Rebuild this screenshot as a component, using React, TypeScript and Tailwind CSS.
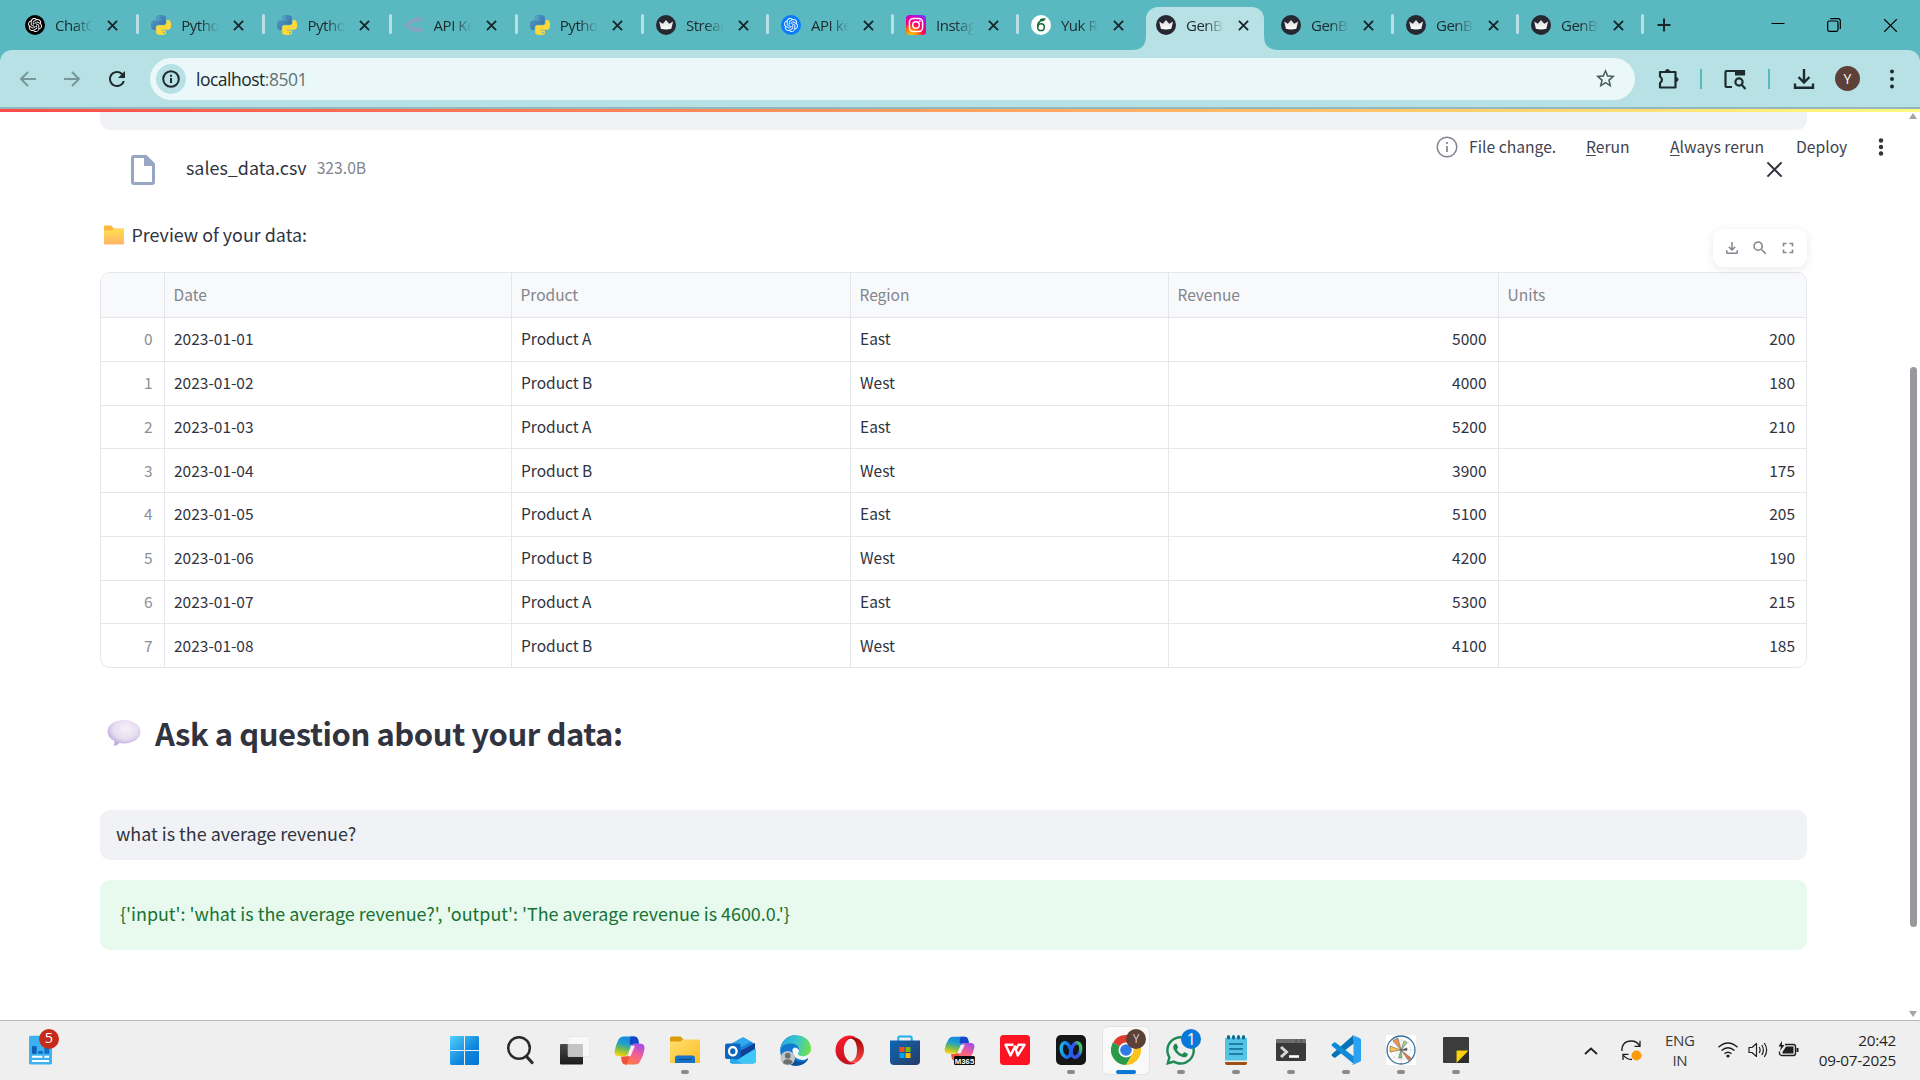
import React from "react";
import { SiOpenai } from "react-icons/si";
import { FaWhatsapp } from "react-icons/fa";
import { MdOutlineFileDownload, MdSearch, MdFullscreen, MdStarBorder, MdRefresh } from "react-icons/md";

/* ---------- favicons ---------- */

function PythonIcon() {
  return (
    <svg viewBox="0 0 24 24" className="size-5">
      <defs>
        <linearGradient id="pyb" x1="0" y1="0" x2="1" y2="1">
          <stop offset="0" stopColor="#5a9fd4" />
          <stop offset="1" stopColor="#306998" />
        </linearGradient>
      </defs>
      <path
        fill="url(#pyb)"
        d="M14.25.18l.9.2.73.26.59.3.45.32.34.34.25.34.16.33.1.3.04.26.02.2-.01.13V8.5l-.05.63-.13.55-.21.46-.26.38-.3.31-.33.25-.35.19-.35.14-.33.1-.3.07-.26.04-.21.02H8.77l-.69.05-.59.14-.5.22-.41.27-.33.32-.27.35-.2.36-.15.37-.1.35-.07.32-.04.27-.02.21v3.06H3.17l-.21-.03-.28-.07-.32-.12-.35-.18-.36-.26-.36-.36-.35-.46-.32-.59-.28-.73-.21-.88-.14-1.05-.05-1.23.06-1.22.16-1.04.24-.87.32-.71.36-.57.4-.44.42-.33.42-.24.4-.16.36-.1.32-.05.24-.01h.16l.06.01h8.16v-.83H6.18l-.01-2.75-.02-.37.05-.34.11-.31.17-.28.25-.26.31-.23.38-.2.44-.18.51-.15.58-.12.64-.1.71-.06.77-.04.84-.02 1.27.05zm-6.3 1.98l-.23.33-.08.41.08.41.23.34.33.22.41.09.41-.09.33-.22.23-.34.08-.41-.08-.41-.23-.33-.33-.22-.41-.09-.41.09z"
      />
      <path
        fill="#ffd83a"
        d="M21.1 6.11l.28.06.32.12.35.18.36.27.36.35.35.47.32.59.28.73.21.88.14 1.04.05 1.23-.06 1.23-.16 1.04-.24.86-.32.71-.36.57-.4.45-.42.33-.42.24-.4.16-.36.09-.32.05-.24.02-.16-.01h-8.22v.82h5.84l.01 2.76.02.36-.05.34-.11.31-.17.29-.25.25-.31.24-.38.2-.44.17-.51.15-.58.13-.64.09-.71.07-.77.04-.84.01-1.27-.04-1.07-.14-.9-.2-.73-.25-.59-.3-.45-.33-.34-.34-.25-.34-.16-.33-.1-.3-.04-.25-.02-.2.01-.13v-5.34l.05-.64.13-.54.21-.46.26-.38.3-.32.33-.24.35-.2.35-.14.33-.1.3-.06.26-.04.21-.02.13-.01h5.84l.69-.05.59-.14.5-.21.41-.28.33-.32.27-.35.2-.36.15-.36.1-.35.07-.32.04-.28.02-.21V6.07h2.09l.14.01zm-6.47 14.25l-.23.33-.08.41.08.41.23.33.33.23.41.08.41-.08.33-.23.23-.33.08-.41-.08-.41-.23-.33-.33-.23-.41-.08-.41.08z"
      />
    </svg>
  );
}

function CrownIcon() {
  return (
    <svg viewBox="0 0 20 20" className="size-5">
      <defs>
        <linearGradient id="crown" x1="0" y1="0" x2="0" y2="1">
          <stop offset="0" stopColor="#d8d8da" />
          <stop offset="1" stopColor="#ffffff" />
        </linearGradient>
      </defs>
      <circle cx="10" cy="10" r="10" fill="#262730" />
      <path d="M3.2 6.4l3.6 2.3L10 5l3.2 3.7 3.9-2.3-1.8 7.4Q10 15.2 4.9 13.8z" fill="url(#crown)" />
    </svg>
  );
}

function OpenAiIcon({ blue }: { blue?: boolean }) {
  return (
    <span className={`flex size-5 items-center justify-center rounded-full ${blue ? "bg-[#0a7cff]" : "bg-black"}`}>
      <SiOpenai className="size-[14px] text-white" />
    </span>
  );
}

function CohereIcon() {
  return (
    <svg viewBox="0 0 20 20" className="size-5" fill="none" stroke="#8fa0bd" strokeWidth="3" strokeLinejoin="round">
      <path d="M14 4.500Q7 5 3.200 10Q7 15 14 15" />
      <path d="M13.500 2L17.500 4.300 14.500 7M14 12.500L18 15 14.500 17.500" strokeWidth="1.600" fill="#8fa0bd" />
    </svg>
  );
}

function InstagramIcon() {
  return (
    <svg viewBox="0 0 20 20" className="size-5">
      <defs>
        <radialGradient id="ig" cx="0.25" cy="1.05" r="1.15">
          <stop offset="0" stopColor="#ffd600" />
          <stop offset="0.3" stopColor="#ff7a00" />
          <stop offset="0.55" stopColor="#ff0169" />
          <stop offset="0.85" stopColor="#d300c5" />
          <stop offset="1" stopColor="#7638fa" />
        </radialGradient>
      </defs>
      <rect width="20" height="20" rx="3.500" fill="url(#ig)" />
      <rect x="3.400" y="3.400" width="13.200" height="13.200" rx="4" fill="none" stroke="#fff" strokeWidth="1.500" />
      <circle cx="10" cy="10" r="3.300" fill="none" stroke="#fff" strokeWidth="1.500" />
      <circle cx="13.800" cy="6.200" r="0.9" fill="#fff" />
    </svg>
  );
}

function OverleafIcon() {
  return (
    <svg viewBox="0 0 20 20" className="size-5">
      <circle cx="10" cy="10" r="10" fill="#fff" />
      <ellipse cx="10" cy="12.200" rx="3.300" ry="3.400" fill="none" stroke="#12693a" strokeWidth="1.500" />
      <path d="M6.700 12.200C6.300 8.500 8.500 5.800 12 5" fill="none" stroke="#12693a" strokeWidth="1.500" />
      <path d="M8.800 4.300Q12 2.800 15 3.600 13.300 6.800 10 6.300z" fill="#12693a" />
    </svg>
  );
}

function Cross({ className }: { className: string }) {
  return (
    <svg viewBox="0 0 12 12" className={className} fill="none" stroke="currentColor">
      <path d="M1 1l10 10M11 1L1 11" />
    </svg>
  );
}

/* ---------- browser chrome ---------- */

type TabData = { icon: React.ReactNode; title: string; wide?: boolean; active?: boolean; sep?: boolean };

const TABS: TabData[] = [
  { icon: <OpenAiIcon />, title: "ChatG", wide: true, sep: true },
  { icon: <PythonIcon />, title: "Pytho", wide: true, sep: true },
  { icon: <PythonIcon />, title: "Pytho", wide: true, sep: true },
  { icon: <CohereIcon />, title: "API Ke", wide: true, sep: true },
  { icon: <PythonIcon />, title: "Pytho", wide: true, sep: true },
  { icon: <CrownIcon />, title: "Stream", sep: true },
  { icon: <OpenAiIcon blue />, title: "API ke", sep: true },
  { icon: <InstagramIcon />, title: "Instag", sep: true },
  { icon: <OverleafIcon />, title: "Yuk R", sep: false },
  { icon: <CrownIcon />, title: "GenBI", active: true },
  { icon: <CrownIcon />, title: "GenBI", sep: true },
  { icon: <CrownIcon />, title: "GenBI", sep: true },
  { icon: <CrownIcon />, title: "GenBI", sep: true },
];

function Tab({ tab }: { tab: TabData }) {
  return (
    <div className={`relative flex h-[50px] shrink-0 items-center pl-[14px] ${tab.wide ? "w-[126.2px]" : "w-[125px]"}`}>
      {tab.active && (
        <>
          <div className="absolute top-[7px] bottom-0 left-1 w-[118px] rounded-t-[12px] bg-[#b7e1e4]" />
          <svg className="absolute bottom-0 left-[-10px] h-[14px] w-[14px]" viewBox="0 0 14 14">
            <path d="M14 0v14H0Q14 14 14 0z" fill="#b7e1e4" />
          </svg>
          <svg className="absolute bottom-0 left-[122px] h-[14px] w-[14px]" viewBox="0 0 14 14">
            <path d="M0 0v14h14Q0 14 0 0z" fill="#b7e1e4" />
          </svg>
        </>
      )}
      <span className="relative flex size-5 shrink-0">{tab.icon}</span>
      <span className="relative ml-[10px] w-[38px] shrink-0 overflow-hidden text-[15px] leading-[22px] tracking-[-0.45px] whitespace-nowrap text-[#1b2a2c] [mask-image:linear-gradient(to_right,black_50%,transparent)]">
        {tab.title}
      </span>
      <Cross className="relative ml-[14px] size-[11px] shrink-0 stroke-[2] text-[#16262a]" />
      {tab.sep && <span className="absolute top-[14px] right-[-2px] h-5 w-[3px] rounded-full bg-[#b7e1e4]" />}
    </div>
  );
}

function TabStrip() {
  return (
    <div className="flex h-[50px] items-center bg-[#5ab8c1] pl-[11px]">
      {TABS.map((t, i) => (
        <Tab key={i} tab={t} />
      ))}
      <svg className="ml-[15px] size-[14px] shrink-0 text-[#16262a]" viewBox="0 0 14 14" stroke="currentColor" strokeWidth="2">
        <path d="M7 0.500v13M0.500 7h13" />
      </svg>
      <div className="ml-auto flex items-center pr-[22px] text-black">
        <svg className="h-[14px] w-[14px]" viewBox="0 0 14 14" stroke="currentColor" strokeWidth="1">
          <path d="M0.500 5.500h13" />
        </svg>
        <svg className="ml-[42px] h-[14px] w-[14px]" viewBox="0 0 14 14" fill="none" stroke="currentColor" strokeWidth="1.200">
          <rect x="0.700" y="3" width="10.300" height="10.300" rx="1.500" />
          <path d="M3.200 0.700H11a2.300 2.300 0 012.300 2.300V11" />
        </svg>
        <Cross className="ml-[42px] size-[15px] stroke-[0.9]" />
      </div>
    </div>
  );
}

function Toolbar() {
  return (
    <div className="bg-[#5ab8c1]">
      <div className="flex h-[57px] items-center rounded-t-[12px] bg-[#b7e1e4] text-[#1d2b2e]">
        <svg className="ml-[19px] size-[18px] text-[#78979a]" viewBox="0 0 18 18" fill="none" stroke="currentColor" strokeWidth="2">
          <path d="M17 9H2.500M9 2L2 9l7 7" />
        </svg>
        <svg className="ml-[26px] size-[18px] text-[#78979a]" viewBox="0 0 18 18" fill="none" stroke="currentColor" strokeWidth="2">
          <path d="M1 9h14.500M9 2l7 7-7 7" />
        </svg>
        <MdRefresh className="ml-[24px] size-6" />
        <div className="ml-[21px] flex h-[42px] w-[1485px] items-center rounded-full bg-[#ebf8f9] pr-[18px] pl-[6px]">
          <span className="flex size-[30px] items-center justify-center rounded-full bg-[#b7e1e4]">
            <svg className="size-[18px]" viewBox="0 0 18 18" fill="none" stroke="currentColor" strokeWidth="2">
              <circle cx="9" cy="9" r="7.800" />
              <path d="M9 8v5M9 4.800v2" />
            </svg>
          </span>
          <span className="ml-[10px] text-[17.500px] leading-6 tracking-[-0.5px] text-[#1b2a2c]">
            localhost<span className="text-[#637274]">:8501</span>
          </span>
          <MdStarBorder className="ml-auto size-[23px] text-[#4b5c5f]" />
        </div>
        <svg className="ml-[22px] size-[24px]" viewBox="0 0 24 24" fill="none" stroke="currentColor" strokeWidth="2.200" strokeLinejoin="round">
          <path d="M3 5h15.500v15.500H3v-4.500q4-3.300 0-6.500z" />
          <path d="M8.500 4.500a2 2 0 014 0zM19 10.500a2 2 0 010 4z" fill="currentColor" strokeWidth="1" />
        </svg>
        <span className="ml-[19px] h-5 w-[2px] bg-[#5ab8c1]" />
        <svg className="ml-[21px] size-6" viewBox="0 0 24 24" fill="none" stroke="currentColor" strokeWidth="2.200">
          <path d="M9 20H3.500q-1 0-1-1V5q0-1 1-1H21v4" />
          <path d="M12 3h10v5.500H12z" fill="currentColor" stroke="none" />
          <circle cx="16" cy="15" r="3.600" />
          <path d="M18.500 17.500L22.500 22" />
        </svg>
        <span className="ml-[21px] h-5 w-[2px] bg-[#5ab8c1]" />
        <svg className="ml-[23px] size-[22px]" viewBox="0 0 22 22" fill="none" stroke="currentColor" strokeWidth="2.400">
          <path d="M11 1v13M5.500 9l5.500 5.500L16.500 9M2 15.500v4.300h18v-4.300" />
        </svg>
        <span className="ml-[20px] flex size-[25px] items-center justify-center rounded-full bg-[#5d4037] text-[14px] leading-none text-white">Y</span>
        <svg className="ml-[29px] h-5 w-[6px]" viewBox="0 0 6 20" fill="currentColor">
          <circle cx="3" cy="2.500" r="2" />
          <circle cx="3" cy="10" r="2" />
          <circle cx="3" cy="17.500" r="2" />
        </svg>
      </div>
      <div className="h-[2px] bg-[#93b7ba]" />
    </div>
  );
}

/* ---------- page ---------- */

const ROWS = [
  ["2023-01-01", "Product A", "East", "5000", "200"],
  ["2023-01-02", "Product B", "West", "4000", "180"],
  ["2023-01-03", "Product A", "East", "5200", "210"],
  ["2023-01-04", "Product B", "West", "3900", "175"],
  ["2023-01-05", "Product A", "East", "5100", "205"],
  ["2023-01-06", "Product B", "West", "4200", "190"],
  ["2023-01-07", "Product A", "East", "5300", "215"],
  ["2023-01-08", "Product B", "West", "4100", "185"],
];

const GRID = "grid grid-cols-[63.500px_347px_339px_318px_330px_1fr]";

function DataTable() {
  return (
    <div className="h-[396px] overflow-hidden rounded-[10px] border border-[#e6e7ea] text-[15.500px] leading-5 text-[#31333f]">
      <div className={`${GRID} h-[45px] border-b border-[#e3e5e8] bg-[#f8f9fb] text-[#83858d]`}>
        <div className="border-r border-[#e3e5e8]" />
        {["Date", "Product", "Region", "Revenue", "Units"].map((h, i) => (
          <div key={h} className={`flex items-center pb-[2px] pl-[9px] ${i < 4 ? "border-r border-[#e3e5e8]" : ""}`}>
            {h}
          </div>
        ))}
      </div>
      {ROWS.map((r, n) => (
        <div key={r[0]} className={`${GRID} h-[43.750px] border-b border-[#e6e7ea]`}>
          <div className="flex items-center justify-end border-r border-[#e6e7ea] pr-[11px] pb-[2px] text-[#8d8f97]">{n}</div>
          {r.map((c, i) => (
            <div
              key={i}
              className={`flex items-center pb-[2px] ${i < 4 ? "border-r border-[#e6e7ea]" : ""} ${i > 2 ? "justify-end pr-[11px]" : "pl-[9.500px]"}`}
            >
              {c}
            </div>
          ))}
        </div>
      ))}
    </div>
  );
}

function AppHeader() {
  return (
    <div className="absolute top-[23px] right-[36px] flex h-[30px] items-center text-[15.700px] leading-5 text-[#41434e]">
      <svg className="size-[22px] text-[#83858d]" viewBox="0 0 22 22" fill="none" stroke="currentColor" strokeWidth="1.500">
        <circle cx="11" cy="11" r="9.800" />
        <path d="M11 10v6M11 6v2" strokeWidth="1.700" />
      </svg>
      <span className="ml-[11px] w-[117px]">File change.</span>
      <span className="w-[84px] pb-[1px]">
        <span className="underline underline-offset-2">R</span>erun
      </span>
      <span className="w-[126px] pb-[1px]">
        <span className="underline underline-offset-2">A</span>lways rerun
      </span>
      <span className="w-[82px]">Deploy</span>
      <svg className="h-[18px] w-[6px] text-[#31333f]" viewBox="0 0 6 18" fill="currentColor">
        <circle cx="3" cy="2.500" r="2.200" />
        <circle cx="3" cy="9" r="2.200" />
        <circle cx="3" cy="15.500" r="2.200" />
      </svg>
    </div>
  );
}

function Page() {
  return (
    <div className="relative h-[911px] overflow-hidden bg-white font-['Noto_Sans_CJK_SC','Noto_Sans',sans-serif] text-[#31333f]">
      <div className="h-[3px] bg-[linear-gradient(to_right,#ff4b4b,#ffc369_70%,#fffd80)]" />
      <div className="mr-[113px] ml-[100px]">
        <div className="h-[18px] rounded-b-[10px] bg-[#f0f2f6]" />
        <div className="flex h-[80px] items-center pr-[24px] pl-[31px]">
          <svg className="h-[30px] w-[24px]" viewBox="0 0 24 30" fill="#97a6c3">
            <path fillRule="evenodd" d="M3 0h12.500L24 8.500V27a3 3 0 01-3 3H3a3 3 0 01-3-3V3a3 3 0 013-3zm0 3v24h18V11h-8V3z" />
          </svg>
          <span className="ml-[31px] pb-[6px] text-[17.900px] leading-6">sales_data.csv</span>
          <span className="ml-[10px] pb-[4px] text-[15.700px] leading-6 text-[#83858d]">323.0B</span>
          <Cross className="mb-[2px] ml-auto size-[17px] stroke-[1.4]" />
        </div>
        <div className="flex h-[62px] items-start justify-between">
          <div className="flex h-[50px] items-center pl-1">
            <svg className="h-5 w-5" viewBox="0 0 20 20">
              <defs>
                <linearGradient id="fold" x1="0" y1="0" x2="0" y2="1">
                  <stop offset="0" stopColor="#ffdc4f" />
                  <stop offset="1" stopColor="#ffb566" />
                </linearGradient>
              </defs>
              <path d="M0 1.500Q0 .5 1 .5h6L10 3.500h9q1 0 1 1V8H0z" fill="#fcb73e" />
              <path d="M0 5.500h7.500l2-1.500H19q1 0 1 1v13.500q0 1-1 1H1q-1 0-1-1z" fill="url(#fold)" />
            </svg>
            <span className="ml-[7.500px] pb-[2px] text-[17.900px] leading-6">Preview of your data:</span>
          </div>
          <div className="mt-[19px] flex h-[38px] w-[94px] items-center justify-center gap-[10px] rounded-[10px] bg-white text-[#83858d] shadow-[0_2px_10px_rgba(0,0,0,0.09)]">
            <MdOutlineFileDownload className="size-[18px]" />
            <MdSearch className="size-[18px]" />
            <MdFullscreen className="size-[18px]" />
          </div>
        </div>
        <DataTable />
        <div className="flex h-[142px] items-center pl-[7px] pb-[12px]">
          <svg className="h-[28px] w-[34px]" viewBox="0 0 34 28">
            <defs>
              <radialGradient id="bub" cx="0.55" cy="0.35" r="0.65">
                <stop offset="0" stopColor="#f6f2f8" />
                <stop offset="0.6" stopColor="#e6dcf0" />
                <stop offset="1" stopColor="#b9a2dc" />
              </radialGradient>
            </defs>
            <path d="M17 1C26 1 33.500 5.500 33.500 12.500S26 24.500 17 24.500q-2.500 0-4.500-.4Q10 27 6.500 27q1.500-2.500.8-5Q.5 18.500.5 12.500C.5 5.500 8 1 17 1z" fill="url(#bub)" />
          </svg>
          <h3 className="ml-[14px] text-[31px] leading-[42px] font-semibold tracking-[-0.44px]">Ask a question about your data:</h3>
        </div>
        <div className="flex h-[50px] items-center rounded-[10px] bg-[#f0f2f6] pb-[3px] pl-4 text-[17.920px]">what is the average revenue?</div>
        <div className="mt-5 flex h-[70px] items-center rounded-[10px] bg-[#e8f9ee] pb-[3px] pl-5 text-[17.920px] text-[#177233]">
          {"{'input': 'what is the average revenue?', 'output': 'The average revenue is 4600.0.'}"}
        </div>
      </div>
      <AppHeader />
      <div className="absolute top-0 right-0 flex h-full w-[14px] flex-col items-center pt-[4px] pb-[3px]">
        <svg className="h-[6px] w-[8px]" viewBox="0 0 8 6">
          <path d="M4 0l4 6H0z" fill="#a3a5a9" />
        </svg>
        <div className="mt-[248px] h-[560px] w-[7px] rounded-full bg-[#98999d]" />
        <svg className="mt-auto h-[6px] w-[8px]" viewBox="0 0 8 6">
          <path d="M4 6L0 0h8z" fill="#a3a5a9" />
        </svg>
      </div>
    </div>
  );
}

/* ---------- taskbar icons ---------- */

function WidgetIcon() {
  return (
    <svg viewBox="0 0 24 30" className="h-[30px] w-[23px]">
      <rect width="24" height="30" rx="1.500" fill="#3db2f0" />
      <path d="M3 11h5v8H3z" fill="#0c5fb0" />
      <path d="M9.500 16h5v3h-5zM16 13h5v6h-5z" fill="#0f6fc4" />
      <path d="M3 22h11M16 22h5M3 26.500h18" stroke="#fff" strokeWidth="2" />
    </svg>
  );
}

function WindowsIcon() {
  return (
    <svg viewBox="0 0 29 29" className="size-[29px]">
      <defs>
        <linearGradient id="win" gradientUnits="userSpaceOnUse" x1="0" y1="0" x2="29" y2="29">
          <stop offset="0" stopColor="#4fd2ff" />
          <stop offset="0.6" stopColor="#1186dd" />
          <stop offset="1" stopColor="#0373d6" />
        </linearGradient>
      </defs>
      <path d="M1 0h13v14H0V1zM15 0h13l1 1v13H15zM0 15h14v14H1l-1-1zM15 15h14v13l-1 1H15z" fill="url(#win)" />
    </svg>
  );
}

function SearchIcon() {
  return (
    <svg viewBox="0 0 28 29" className="h-[29px] w-[28px]" fill="none" stroke="#2b2b2b">
      <circle cx="13" cy="12" r="10.800" strokeWidth="2.500" />
      <path d="M20.500 20.500l5.500 6" strokeWidth="3.200" strokeLinecap="round" />
    </svg>
  );
}

function TaskViewIcon() {
  return (
    <svg viewBox="0 0 30 29" className="h-[29px] w-[30px]">
      <defs>
        <linearGradient id="tv" x1="0" y1="0" x2="0" y2="1">
          <stop offset="0" stopColor="#4a4a4a" />
          <stop offset="1" stopColor="#1a1a1a" />
        </linearGradient>
      </defs>
      <rect y="8" width="23" height="20.500" rx="1" fill="url(#tv)" />
      <rect x="8" y="0.500" width="21.500" height="20" rx="1" fill="#f8f8f8" stroke="#dcdcdc" strokeWidth="0.5" />
      <path d="M8 8h15v12.500H8z" fill="#c4c4c4" />
    </svg>
  );
}

/* Two interlocking ribbons; `uid` keeps the gradient ids unique per instance. */
function CopilotShape({ uid }: { uid: string }) {
  return (
    <>
      <defs>
        <linearGradient id={`${uid}a`} x1="0.6" y1="0" x2="0.3" y2="1">
          <stop offset="0" stopColor="#0f86e6" />
          <stop offset="0.4" stopColor="#25a0c8" />
          <stop offset="0.65" stopColor="#6dbb55" />
          <stop offset="1" stopColor="#f7d30c" />
        </linearGradient>
        <linearGradient id={`${uid}b`} x1="0.8" y1="0" x2="0.3" y2="1">
          <stop offset="0" stopColor="#a44bec" />
          <stop offset="0.5" stopColor="#f5608f" />
          <stop offset="1" stopColor="#ff7a3f" />
        </linearGradient>
      </defs>
      <path d="M9 1.500h11q2.500 0 3.300 2.500L24 8h-4q-2.500 0-3.200 2L13.500 18.500q-.8 2-3 2H5q-4.500 0-4.500-4.500Q1.500 9.500 4.500 4 6 1.500 9 1.500z" fill={`url(#${uid}a)`} />
      <path d="M16 1.500h4q2.500 0 3.300 2.500L24.300 8.500H20q-2 0-2.800 1.500L15 8z" fill="#1447c8" />
      <path d="M21 28.500H11q-2.500 0-3.300-2.500L7 21h3.500q2.200 0 3-2L16.800 10.500Q17.600 8.500 20 8.500h5.500q4.500 0 4 5-1 7-4.500 12.500Q24 28.500 21 28.500z" fill={`url(#${uid}b)`} />
      <path d="M7 21h3.500q2.200 0 3-2l1-2.500 1 2.500-3 9.500H11q-2.500 0-3.300-2.500z" fill="#f0523a" />
      <path d="M16.500 10.500h3.800L16 20.500h-3.200z" fill="#f3eef5" />
    </>
  );
}

function CopilotIcon() {
  return (
    <svg viewBox="0 0 30 30" className="size-[31px]">
      <CopilotShape uid="cp" />
    </svg>
  );
}

function M365Icon() {
  return (
    <svg viewBox="0 0 32 30" className="h-[30px] w-[32px]">
      <g transform="translate(0 0.500) scale(1.030 0.880)">
        <CopilotShape uid="m3" />
      </g>
      <rect x="10" y="21" width="21" height="9" rx="1.500" fill="#0a0a0a" />
      <text x="20.500" y="28.500" fontSize="7.800" fontWeight="700" fill="#fff" textAnchor="middle" fontFamily="Liberation Sans, sans-serif">
        M365
      </text>
    </svg>
  );
}

function ExplorerIcon() {
  return (
    <svg viewBox="0 0 30 28" className="h-[28px] w-[30px]">
      <defs>
        <linearGradient id="ex" x1="0" y1="0" x2="1" y2="1">
          <stop offset="0" stopColor="#ffdf72" />
          <stop offset="1" stopColor="#fcbd22" />
        </linearGradient>
      </defs>
      <path d="M0 2Q0 .5 1.500 .5H10.500L13.500 3.500V9H0z" fill="#dd9a0a" />
      <path d="M0 5.500h10.500l2.500-2H28.500q1.500 0 1.500 1.500v21q0 1-1 1h-28Q0 27 0 26z" fill="url(#ex)" />
      <path d="M5 27V22q0-2.500 2.500-2.500h15Q25 19.500 25 22v5z" fill="#1673c8" />
      <path d="M8.500 23.500h13" stroke="#0b4d91" strokeWidth="1.300" />
    </svg>
  );
}

function OutlookIcon() {
  return (
    <svg viewBox="0 0 31 27" className="h-[27px] w-[31px]">
      <path d="M6 7L16.500 1Q18 .2 19.500 1L30 7v17q0 2.500-2.500 2.500h-20Q5 26.500 5 24z" fill="#1a84dc" />
      <path d="M6 7L16.500 1Q18 .2 19.500 1L26 4.800 16 10H5z" fill="#31a8ec" />
      <path d="M15 14L30 6v5.500L15 21z" fill="#123f9a" />
      <path d="M6 26.500L31 11.500V24q0 2.500-2.500 2.500z" fill="#3dc8f8" />
      <path d="M5 20l12 6.500H7.500Q5 26.500 5 24z" fill="#27a6ea" />
      <rect y="6.500" width="15.500" height="15.500" rx="2" fill="#0f65bd" />
      <ellipse cx="7.800" cy="14.200" rx="3.800" ry="4.200" fill="none" stroke="#fff" strokeWidth="2.300" />
    </svg>
  );
}

function EdgeIcon() {
  return (
    <svg viewBox="0 0 30 30" className="size-[31px]">
      <defs>
        <linearGradient id="eg1" x1="0" y1="0.3" x2="1" y2="0.5">
          <stop offset="0" stopColor="#2aa5e0" />
          <stop offset="0.5" stopColor="#36c6cf" />
          <stop offset="1" stopColor="#6fe04c" />
        </linearGradient>
      </defs>
      <path d="M15 .2A14.800 14.800 0 00.2 15 14.800 14.800 0 0015 29.800c5 0 9.500-2.500 12.200-6.500L20 15z" fill="#1277cf" />
      <path d="M.3 13.500C1.500 5.500 7.500.2 15.300.2 24.500.2 30 6.500 30 13c0 4.500-3.500 7.500-7.800 7.500-3.500 0-5.200-1-5-2.200.2-1 1.300-1.500 1.300-4C18.500 11 15 8.300 10.500 8.300 6 8.300 2 10.500.3 13.500z" fill="url(#eg1)" />
      <path d="M10.500 16c0 6 4.500 10 9.500 10 3 0 5-1 7.300-2.800-2 4-6.500 6.600-12.300 6.600-6 0-9-4.500-8.500-8.500.3-2.500 2-4.500 4-5.300z" fill="#0c5299" />
      <path d="M12 14q2-3 5-1 1.500 1 1.500 3-1.500 1.500-1 2.800 1.200 1.700 5 1.700 2.500 0 4.500-1.200.5 3.500-3 4.700-4 .8-8-1.500t-4-8.500z" fill="#f2f6f8" />
      <circle cx="7.500" cy="22.500" r="7" fill="#c3c5c7" />
      <circle cx="7.500" cy="20" r="2.800" fill="#6d7073" />
      <path d="M3 27q0-3.500 4.500-3.500t4.500 3.500q-2 1.500-4.500 1.500T3 27z" fill="#6d7073" />
    </svg>
  );
}

function OperaIcon() {
  return (
    <svg viewBox="0 0 30 30" className="size-[30px]">
      <defs>
        <linearGradient id="opl" x1="0" y1="0" x2="0" y2="1">
          <stop offset="0" stopColor="#ff1b2d" />
          <stop offset="1" stopColor="#c1121f" />
        </linearGradient>
        <linearGradient id="opr" x1="0" y1="0" x2="0" y2="1">
          <stop offset="0" stopColor="#9c0000" />
          <stop offset="1" stopColor="#ff4b4b" />
        </linearGradient>
      </defs>
      <path d="M15 .5A14.500 14.500 0 1015 29.500Q18 29.500 21 28C13 28 8.800 22 8.800 15S13 2 21 2Q18 .5 15 .5z" fill="url(#opl)" />
      <path d="M11.500 5Q14 2 17.500 2q4 0 7 2.500A14.500 14.500 0 0124.500 25.500Q21 28.500 17 28q-3.500-.5-5.500-3 2 1.500 4 1.500c4 0 6.500-5 6.500-11.500S19.500 3.500 15.500 3.500q-2 0-4 1.500z" fill="url(#opr)" />
    </svg>
  );
}

function StoreIcon() {
  return (
    <svg viewBox="0 0 30 30" className="size-[30px]">
      <defs>
        <linearGradient id="st" x1="0" y1="0" x2="1" y2="1">
          <stop offset="0" stopColor="#0c68b8" />
          <stop offset="1" stopColor="#2a3a63" />
        </linearGradient>
      </defs>
      <path d="M8.300 7V3q0-1.500 1.500-1.500h10.400q1.500 0 1.500 1.500v4" fill="none" stroke="#1fb0ea" strokeWidth="2" />
      <path d="M0 5.500h30V26q0 4-4 4H4q-4 0-4-4z" fill="url(#st)" />
      <path d="M9.500 12h5v5h-5z" fill="#f25022" />
      <path d="M15.500 12h5v5h-5z" fill="#7fba00" />
      <path d="M9.500 18h5v5h-5z" fill="#00a4ef" />
      <path d="M15.500 18h5v5h-5z" fill="#ffb900" />
    </svg>
  );
}

function WpsIcon() {
  return (
    <svg viewBox="0 0 30 30" className="size-[30px]">
      <rect width="30" height="30" rx="3.500" fill="#fd1422" />
      <path d="M13.500 9.800H5.500L10.500 20.500 15 11.500 17.700 20.500 24.500 9.800H18.500L16.500 13.500" fill="none" stroke="#fff" strokeWidth="2.400" strokeLinejoin="round" />
    </svg>
  );
}

function WebexIcon() {
  return (
    <svg viewBox="0 0 30 30" className="size-[30px]" fill="none" strokeLinecap="round">
      <defs>
        <linearGradient id="wx1" x1="0" y1="0" x2="1" y2="0.600">
          <stop offset="0" stopColor="#18c5e8" />
          <stop offset="0.8" stopColor="#1a66ee" />
        </linearGradient>
        <linearGradient id="wx2" x1="0.9" y1="0" x2="0.3" y2="0.700">
          <stop offset="0" stopColor="#49c84c" />
          <stop offset="0.3" stopColor="#38b979" />
          <stop offset="0.6" stopColor="#3356f0" />
        </linearGradient>
      </defs>
      <rect width="30" height="30" rx="5" fill="#151617" />
      <ellipse cx="20" cy="15" rx="4.600" ry="7.300" transform="rotate(14 20 15)" stroke="url(#wx2)" strokeWidth="3.400" />
      <ellipse cx="10" cy="15" rx="4.600" ry="7.300" transform="rotate(-14 10 15)" stroke="url(#wx1)" strokeWidth="3.400" />
    </svg>
  );
}

function ChromeIcon() {
  return (
    <svg viewBox="0 0 30 30" className="size-[30px]">
      <path d="M15 15L2 7.500A15 15 0 0128 7.500H15z" fill="#e33b2e" />
      <path d="M2 7.500A15 15 0 0015 30L21.500 18.800 15 15z" fill="#2b9a48" />
      <path d="M28 7.500A15 15 0 0115 30L21.500 18.800 15 7.500z" fill="#fcc31e" />
      <circle cx="15" cy="15" r="7.500" fill="#fff" />
      <circle cx="15" cy="15" r="5.800" fill="#2f79e8" />
    </svg>
  );
}

function NotepadIcon() {
  return (
    <svg viewBox="0 0 22 30" className="h-[30px] w-[22px]">
      <path d="M0 24h22v4q0 2-2 2H2q-2 0-2-2z" fill="#a04f14" />
      <path d="M0 24h22v3H0z" fill="#eee" />
      <rect y="2.500" width="22" height="23" rx="1.500" fill="#55c4e4" />
      <path d="M4 9h14M4 14h14M4 19h14" stroke="#0d6a8e" strokeWidth="1.700" />
      <g fill="#0d6a8e">
        <rect x="2" width="3" height="4.500" rx="1.500" />
        <rect x="7" width="3" height="4.500" rx="1.500" />
        <rect x="12" width="3" height="4.500" rx="1.500" />
        <rect x="17" width="3" height="4.500" rx="1.500" />
      </g>
    </svg>
  );
}

function TerminalIcon() {
  return (
    <svg viewBox="0 0 30 22" className="h-[22px] w-[30px]">
      <rect width="30" height="22" rx="1.500" fill="#3a3a3a" />
      <path d="M0 4V1.500Q0 0 1.500 0h27Q30 0 30 1.500V4z" fill="#6e6e6e" />
      <path d="M20 0v4M25 0v4" stroke="#4a4a4a" />
      <path d="M5 8l5.500 5L5 18" fill="none" stroke="#d6d6d6" strokeWidth="3" />
      <path d="M13 17.500h10" stroke="#fff" strokeWidth="2.600" />
    </svg>
  );
}

function VsCodeIcon() {
  return (
    <svg viewBox="0 0 30 30" className="size-[30px]">
      <path d="M22 .5L1 19q-1 1 0 2l2 1.500q.8.500 1.500 0L23.500 8z" fill="#0872b9" />
      <path d="M1 9l2-1.500q.8-.5 1.500 0L23.500 22v7.500L1 11Q0 10 1 9z" fill="#1089d6" />
      <path d="M22 .2l7 3q1 .5 1 1.700v20.200q0 1.200-1 1.700l-7 3q-.8.200-1.500-.5Q22.500 30 22.500 28V2Q22.500.5 20.800.8 21.500.1 22 .2z" fill="#2ba3f2" />
    </svg>
  );
}

function MatplotlibIcon() {
  return (
    <svg viewBox="0 0 30 30" className="size-[30px]">
      <path d="M0 0h30v30H0z" fill="#fff" />
      <g fill="none" stroke="#d2d6da" strokeWidth="0.6">
        <circle cx="15" cy="15" r="5" />
        <circle cx="15" cy="15" r="10" />
        <path d="M1 15h28M15 1v28M5 5l20 20M25 5L5 25" />
      </g>
      <circle cx="15" cy="15" r="14" fill="none" stroke="#3f6f97" strokeWidth="1.300" />
      <g stroke="#555" strokeWidth="0.500">
        <path d="M15 15L7 5.500 12 3z" fill="#f2924c" />
        <path d="M15 15L4 17V11z" fill="#fbbf4a" />
        <path d="M15 15l3-9 3 1.500z" fill="#a5dc86" />
        <path d="M15 15l10 8-2.500 2.500z" fill="#e87743" />
        <path d="M15 15l1 8h-3.500z" fill="#7fcf7a" />
        <path d="M15 15l6-2v2.500z" fill="#4b5660" />
      </g>
    </svg>
  );
}

function StickyIcon() {
  return (
    <svg viewBox="0 0 26 26" className="size-[26px]">
      <path d="M1 0h24q1 0 1 1v12.500H13.500V26H1q-1 0-1-1V1q0-1 1-1z" fill="#3c3c3c" />
      <path d="M13 26V13h13v13z" fill="#2c2c2c" />
      <path d="M13.500 26V13.500H25.500z" fill="#fcd20a" />
    </svg>
  );
}

/* ---------- taskbar ---------- */

type App = { icon: React.ReactNode; running?: boolean; active?: boolean; badge?: React.ReactNode };

const APPS: App[] = [
  { icon: <WindowsIcon /> },
  { icon: <SearchIcon /> },
  { icon: <TaskViewIcon /> },
  { icon: <CopilotIcon /> },
  { icon: <ExplorerIcon />, running: true },
  { icon: <OutlookIcon /> },
  { icon: <EdgeIcon /> },
  { icon: <OperaIcon /> },
  { icon: <StoreIcon /> },
  { icon: <M365Icon /> },
  { icon: <WpsIcon /> },
  { icon: <WebexIcon />, running: true },
  {
    icon: <ChromeIcon />,
    active: true,
    badge: (
      <span className="absolute top-[8px] left-[28px] flex size-5 items-center justify-center rounded-full bg-[#5d4037] text-[12px] leading-none text-[#d5cbc8]">Y</span>
    ),
  },
  {
    icon: <FaWhatsapp className="size-[33px] text-[#1f8a54]" />,
    running: true,
    badge: (
      <span className="absolute top-[8px] left-[28px] flex size-5 items-center justify-center rounded-full bg-[#0a78d6] text-[16px] leading-none text-white">1</span>
    ),
  },
  { icon: <NotepadIcon />, running: true },
  { icon: <TerminalIcon />, running: true },
  { icon: <VsCodeIcon />, running: true },
  { icon: <MatplotlibIcon />, running: true },
  { icon: <StickyIcon />, running: true },
];

function TrayIcons() {
  return (
    <div className="flex items-center pb-[2px] text-[#1f1f1f]">
      <svg className="size-5" viewBox="0 0 20 20" fill="none" stroke="currentColor" strokeWidth="1.400">
        <path d="M.5 7.200Q10-1 19.500 7.200M3.500 10.500Q10 4.800 16.500 10.500M6.500 13.700q3.500-3 7 0" />
        <circle cx="10" cy="16" r="1.600" fill="currentColor" stroke="none" />
      </svg>
      <svg className="ml-[10px] size-5" viewBox="0 0 20 20" fill="none" stroke="currentColor" strokeWidth="1.200">
        <path d="M1 7.500h3L8.500 3.500v13L4 12.500H1z" strokeLinejoin="round" />
        <path d="M11.200 7q1.800 3 0 6M13.800 5q3.200 5 0 10M16.300 3q4.700 7 0 14" />
      </svg>
      <svg className="ml-[10px] h-5 w-[21px]" viewBox="0 0 21 20" fill="none" stroke="currentColor" strokeWidth="1.400">
        <path d="M7 4.500h8.500q2 0 2 2v7q0 2-2 2H4q-2.500 0-2.500-2.500v-1.500" />
        <path d="M8 6.500h7.500v7H4.500V12z" fill="currentColor" stroke="none" />
        <path d="M18.500 8h2v4h-2z" fill="currentColor" stroke="none" />
        <path d="M4 1L.5 6.500H3L2 11l4.500-6H4z" fill="currentColor" stroke="none" />
      </svg>
    </div>
  );
}

function Taskbar() {
  return (
    <div className="flex h-[60px] items-center border-t border-[#b9b9b9] bg-[#efefef] text-[#1f1f1f]">
      <div className="relative ml-[29px] w-[408px] pb-[2px]">
        <WidgetIcon />
        <span className="absolute top-[-6px] left-[10px] flex size-5 items-center justify-center rounded-full bg-[#c42b1c] text-[14.500px] leading-none text-white">5</span>
      </div>
      {APPS.map((a, i) => (
        <div key={i} className="relative flex h-[59px] w-[55.100px] shrink-0 items-center justify-center">
          {a.active && <span className="absolute top-[5px] h-[49px] w-[48px] rounded-[6px] border border-[#e3e3e3] bg-[#f9f9f9]" />}
          <span className="relative pb-[1px]">{a.icon}</span>
          {a.badge}
          {a.running && <span className="absolute top-[49px] h-1 w-2 rounded-full bg-[#8a8a8a]" />}
          {a.active && <span className="absolute top-[49px] h-1 w-5 rounded-full bg-[#0a78d6]" />}
        </div>
      ))}
      <div className="ml-auto flex items-center pr-6">
        <svg className="h-[8px] w-[14px]" viewBox="0 0 14 8" fill="none" stroke="currentColor" strokeWidth="1.800">
          <path d="M1 7l6-5.500L13 7" />
        </svg>
        <svg className="ml-[23px] size-[21px]" viewBox="0 0 21 21" fill="none" stroke="currentColor" strokeWidth="1.300">
          <path d="M.8 11Q.8 1 10.300 1q5.700 0 8.500 5M19 .8v5.500h-5.500M11 19.500q-6 0-9-5M2 20v-5.700h5.500" />
          <circle cx="15.500" cy="15.500" r="5" fill="#fb9a0c" stroke="none" />
        </svg>
        <div className="ml-[23px] pb-[2px] text-center text-[15px] leading-5 tracking-[-0.3px] text-[#3b3b3b]">
          ENG
          <br />
          IN
        </div>
        <div className="ml-[23px]">
          <TrayIcons />
        </div>
        <div className="ml-[20px] pb-[2px] text-right text-[15.300px] leading-5 tracking-[-0.25px]">
          20:42
          <br />
          09-07-2025
        </div>
      </div>
    </div>
  );
}

export default function App() {
  return (
    <div className="h-[1080px] w-[1920px] overflow-hidden bg-white font-['Open_Sans','Noto_Sans',sans-serif]">
      <TabStrip />
      <Toolbar />
      <Page />
      <Taskbar />
    </div>
  );
}
